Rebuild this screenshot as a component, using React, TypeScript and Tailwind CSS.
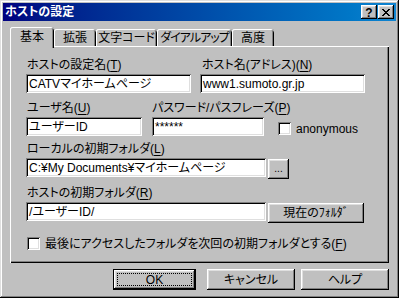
import React from "react";

const sunken =
  "bg-white shadow-[inset_1px_1px_#808080,inset_-1px_-1px_#fff,inset_2px_2px_#000,inset_-2px_-2px_#dfdfdf]";
const raised =
  "bg-[#c0c0c0] shadow-[inset_-1px_-1px_#000,inset_1px_1px_#fff,inset_-2px_-2px_#808080,inset_2px_2px_#dfdfdf]";

function U({ c }: { c: string }) {
  return (
    <>
      (<span className="underline underline-offset-[2px]">{c}</span>)
    </>
  );
}

function Field({ w, text }: { w: string; text: string }) {
  return (
    <div className={`${sunken} ${w} h-[19px] flex items-center pl-[3px] whitespace-nowrap overflow-hidden leading-[14px]`}>
      {text}
    </div>
  );
}

function Check() {
  return <div className={`${sunken} w-[13px] h-[13px] shrink-0`} />;
}

function Tab({ label, w, active, tight }: { label: string; w: string; active?: boolean; tight?: boolean }) {
  return (
    <div
      className={`${w} shrink-0 flex items-center justify-center whitespace-nowrap rounded-t-[3px] bg-[#c0c0c0] shadow-[inset_1px_0_#fff,inset_0_1px_#fff,inset_-1px_0_#000,inset_-2px_0_#808080] ${
        active ? "h-[21px] mb-[-2px] relative z-10 pb-[2px]" : "h-[17px]"
      } ${tight ? "tracking-[-1px]" : ""}`}
    >
      {label}
    </div>
  );
}

export default function App() {
  return (
    <div className="w-[399px] h-[298px] bg-[#c0c0c0] p-[3px] flex flex-col text-[12px] text-black font-['Liberation_Sans','Noto_Sans_CJK_JP',sans-serif] [font-feature-settings:'palt'] shadow-[inset_-1px_-1px_#000,inset_1px_1px_#dfdfdf,inset_-2px_-2px_#808080,inset_2px_2px_#fff]">
      {/* title bar */}
      <div className="h-[18px] shrink-0 flex items-center bg-linear-to-r from-[#000080] to-[#1084d0] pl-[2px] pr-[2px]">
        <span className="text-white font-bold leading-none">ホストの設定</span>
        <div className="ml-auto flex gap-[1px]">
          <div className={`${raised} w-[16px] h-[14px] flex items-center justify-center font-bold text-[12px] leading-none pt-[1px]`}>
            ?
          </div>
          <div className={`${raised} w-[16px] h-[14px] flex items-center justify-center`}>
            <svg width="8" height="7" viewBox="0 0 8 7" shapeRendering="crispEdges">
              <path d="M0 0h2v1h-2zM6 0h2v1h-2zM1 1h2v1h-2zM5 1h2v1h-2zM2 2h4v1h-4zM3 3h2v1h-2zM2 4h4v1h-4zM1 5h2v1h-2zM5 5h2v1h-2zM0 6h2v1h-2zM6 6h2v1h-2z" fill="#000" />
            </svg>
          </div>
        </div>
      </div>

      <div className="flex-1 flex flex-col px-[7px] pt-[6px]">
        {/* tabs */}
        <div className="h-[19px] flex items-end">
          <Tab label="基本" w="w-[44px]" active />
          <Tab label="拡張" w="w-[42px]" />
          <Tab label="文字コード" w="w-[61px]" />
          <Tab label="ダイアルアップ" w="w-[75px]" tight />
          <Tab label="高度" w="w-[42px]" />
        </div>

        {/* panel */}
        <div className="h-[217px] bg-[#c0c0c0] shadow-[inset_1px_1px_#fff,inset_-1px_-1px_#000,inset_-2px_-2px_#808080] pl-[16px] pt-[12px] flex flex-col leading-[14px] whitespace-nowrap">
          {/* row 1 */}
          <div className="flex gap-[9px]">
            <div className="w-[165px] flex flex-col gap-[2px]">
              <div className="h-[14px] pl-[1px]">ホストの設定名<U c="T" /></div>
              <Field w="w-[165px]" text="CATVマイホームページ" />
            </div>
            <div className="w-[165px] flex flex-col gap-[2px]">
              <div className="h-[14px] pl-[2px]">ホスト名(アドレス)<U c="N" /></div>
              <Field w="w-[165px]" text="www1.sumoto.gr.jp" />
            </div>
          </div>

          {/* row 2 */}
          <div className="flex mt-[8px]">
            <div className="w-[116px] shrink-0 flex flex-col gap-[2px]">
              <div className="h-[14px] pl-[1px]">ユーザ名<U c="U" /></div>
              <Field w="w-[116px]" text="ユーザーID" />
            </div>
            <div className="w-[112px] shrink-0 flex flex-col gap-[2px] ml-[10px]">
              <div className="h-[14px]">パスワード/パスフレーズ<U c="P" /></div>
              <Field w="w-[112px]" text="******" />
            </div>
            <div className="flex items-center gap-[5px] ml-[14px] mt-[21px] h-[13px]">
              <Check />
              <span>anonymous</span>
            </div>
          </div>

          {/* row 3 */}
          <div className="flex flex-col gap-[2px] mt-[6px]">
            <div className="h-[14px] pl-[1px]">ローカルの初期フォルダ<U c="L" /></div>
            <div className="flex gap-[2px] items-start">
              <Field w="w-[240px]" text="C:¥My Documents¥マイホームページ" />
              <div className={`${raised} w-[21px] h-[20px] mt-[1px] flex items-center justify-center text-[10px] leading-none`}>...</div>
            </div>
          </div>

          {/* row 4 */}
          <div className="flex flex-col gap-[2px] mt-[7px]">
            <div className="h-[14px] pl-[1px]">ホストの初期フォルダ<U c="R" /></div>
            <div className="flex gap-[2px] items-start">
              <Field w="w-[240px]" text="/ユーザーID/" />
              <div className={`${raised} w-[96px] h-[20px] mt-[1px] flex items-center justify-center`}>現在のﾌｫﾙﾀﾞ</div>
            </div>
          </div>

          {/* row 5 */}
          <div className="flex items-center gap-[5px] mt-[14px] pl-[1px] h-[13px]">
            <Check />
            <span>最後にアクセスしたフォルダを次回の初期フォルダとする<U c="F" /></span>
          </div>
        </div>

        {/* buttons */}
        <div className="flex justify-end mt-[6px]">
          <div className="w-[83px] h-[21px] bg-black p-[1px]">
            <div className={`${raised} w-full h-full flex items-center justify-center p-[3px]`}>
              <div className="w-full h-full border border-dotted border-black flex items-center justify-center leading-none">OK</div>
            </div>
          </div>
          <div className={`${raised} w-[88px] h-[21px] ml-[11px] flex items-center justify-center`}>キャンセル</div>
          <div className={`${raised} w-[88px] h-[21px] ml-[6px] flex items-center justify-center`}>ヘルプ</div>
        </div>
      </div>
    </div>
  );
}
